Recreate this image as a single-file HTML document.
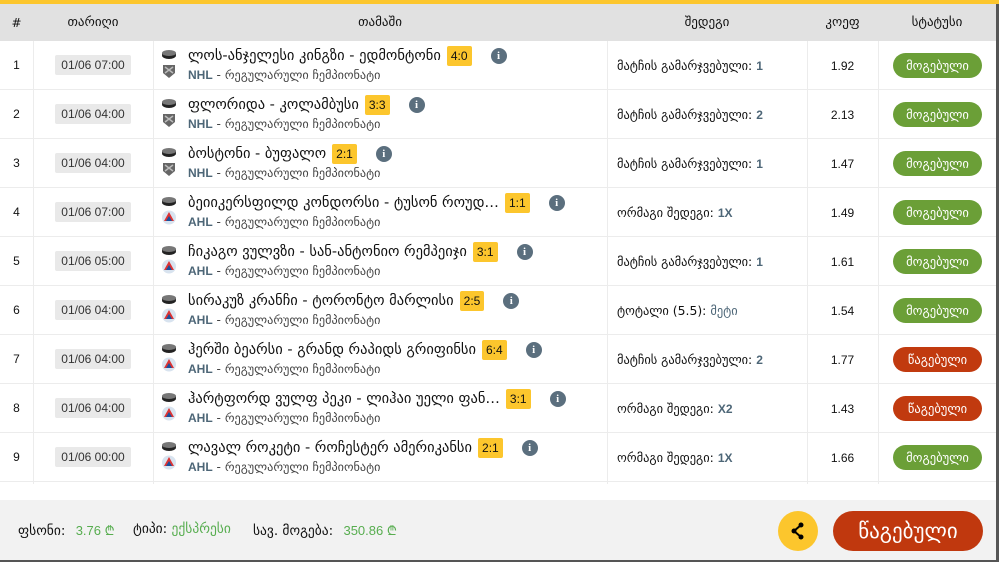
<!DOCTYPE html>
<html><head><meta charset="utf-8"><style>
*{margin:0;padding:0;box-sizing:border-box}
body{width:999px;height:562px;overflow:hidden;background:#fff;font-family:"DejaVu Sans","Liberation Sans",sans-serif;position:relative;color:#111}
.top{position:absolute;left:0;top:0;width:999px;height:4px;background:#fcc62d}
.edge{position:absolute;right:0;top:4px;width:3px;height:556px;background:#555}
.hdr{position:absolute;left:0;top:4px;width:996px;height:37px;background:#e1e1e1;font-size:13px;color:#111}
.hdr div,.row div.c{position:absolute;top:0;height:100%;display:flex;align-items:center;justify-content:center}
.row{position:absolute;left:0;width:996px;height:49px;border-bottom:1px solid #ececec}
.vl{position:absolute;top:41px;height:443px;width:1px;background:#ececec}
.num{font-size:12px;font-family:"Liberation Sans",sans-serif}
.date{background:#e9e9e9;font-family:"Liberation Sans",sans-serif;font-size:12px;color:#333;padding:3px 6px;border-radius:2px}
.g{position:absolute;left:162px;top:0;height:49px;width:440px}
.puck{position:absolute;left:0;top:9px;width:14px;height:9px}
.lg{position:absolute;left:0;top:22px;width:14px;height:15px}
.t{position:absolute;left:26px;top:6px;font-size:14.5px;white-space:nowrap;display:flex;align-items:center;height:18px}
.sc{background:#fcc62d;font-family:"Liberation Sans",sans-serif;font-size:12px;padding:2px 4px;margin-left:6px;border-radius:2px;height:20px;line-height:16px}
.i{display:inline-block;width:16px;height:16px;border-radius:50%;background:#5b6f7e;color:#fff;font:bold 11px "Liberation Serif",serif;text-align:center;line-height:16px;margin-left:19px}
.s{position:absolute;left:26px;top:27px;font-size:12.2px;color:#444;white-space:nowrap}
.s b{color:#4d6677;font-family:"Liberation Sans",sans-serif;font-size:12px}
.res{position:absolute;left:617px;top:0;height:49px;display:flex;align-items:center;font-size:12.4px}
.res b{color:#4d6677;font-family:"Liberation Sans",sans-serif;margin-left:4px;font-size:12px}
.k{position:absolute;left:807px;width:71px;top:0;height:49px;display:flex;align-items:center;justify-content:center;font:12px "Liberation Sans",sans-serif}
.p{position:absolute;left:893px;top:12px;width:89px;height:25px;border-radius:13px;color:#fff;font-size:12.5px;display:flex;align-items:center;justify-content:center}
.w{background:#6b9f37}.l{background:#c13a0f}
.foot{position:absolute;left:0;top:500px;width:996px;height:60px;background:#f2f2f2}
.bot{position:absolute;left:0;top:560px;width:999px;height:2px;background:#555}
.fi{position:absolute;top:21px;font-size:13.5px;white-space:nowrap}
.gr{color:#57ad4f;font-family:"Liberation Sans",sans-serif;font-size:13px}
</style></head><body>
<div class="top"></div>
<div class="hdr">
<div style="left:0;width:33px;font-size:12px">#</div>
<div style="left:33px;width:120px">თარიღი</div>
<div style="left:153px;width:454px">თამაში</div>
<div style="left:607px;width:200px">შედეგი</div>
<div style="left:807px;width:71px">კოეფ</div>
<div style="left:878px;width:118px">სტატუსი</div>
</div>
<div class="vl" style="left:33px"></div><div class="vl" style="left:153px"></div><div class="vl" style="left:607px"></div><div class="vl" style="left:807px"></div><div class="vl" style="left:878px"></div>
<svg width="0" height="0" style="position:absolute"><defs>
<symbol id="pk" viewBox="0 0 14 9"><ellipse cx="7" cy="5.5" rx="7" ry="3.5" fill="#222"/><rect x="0" y="3" width="14" height="2.5" fill="#333"/><ellipse cx="7" cy="3" rx="7" ry="3" fill="#777"/></symbol>
<symbol id="nhl" viewBox="0 0 14 15"><path d="M1 2h12v8l-6 5-6-5z" fill="#666"/><path d="M3 4l8 6M11 4l-8 6" stroke="#bbb" stroke-width="1.5"/></symbol>
<symbol id="ahl" viewBox="0 0 14 15"><circle cx="7" cy="7.5" r="7" fill="#d8e3ef"/><path d="M7 2l5 9H2z" fill="#d33"/><path d="M7 6l3 5H4z" fill="#1b4f9c"/></symbol>
</defs></svg>

<div class="row" style="top:41px"><div class="c num" style="left:0;width:33px">1</div><div class="c" style="left:33px;width:120px"><span class="date">01/06 07:00</span></div>
<div class="g"><svg class="puck"><use href="#pk"/></svg><svg class="lg"><use href="#nhl"/></svg><div class="t">ლოს-ანჯელესი კინგზი - ედმონტონი<span class="sc">4:0</span><span class="i">i</span></div><div class="s"><b>NHL</b> - რეგულარული ჩემპიონატი</div></div>
<div class="res">მატჩის გამარჯვებული:<b>1</b></div><div class="k">1.92</div><div class="p w">მოგებული</div></div>

<div class="row" style="top:90px"><div class="c num" style="left:0;width:33px">2</div><div class="c" style="left:33px;width:120px"><span class="date">01/06 04:00</span></div>
<div class="g"><svg class="puck"><use href="#pk"/></svg><svg class="lg"><use href="#nhl"/></svg><div class="t">ფლორიდა - კოლამბუსი<span class="sc">3:3</span><span class="i">i</span></div><div class="s"><b>NHL</b> - რეგულარული ჩემპიონატი</div></div>
<div class="res">მატჩის გამარჯვებული:<b>2</b></div><div class="k">2.13</div><div class="p w">მოგებული</div></div>

<div class="row" style="top:139px"><div class="c num" style="left:0;width:33px">3</div><div class="c" style="left:33px;width:120px"><span class="date">01/06 04:00</span></div>
<div class="g"><svg class="puck"><use href="#pk"/></svg><svg class="lg"><use href="#nhl"/></svg><div class="t">ბოსტონი - ბუფალო<span class="sc">2:1</span><span class="i">i</span></div><div class="s"><b>NHL</b> - რეგულარული ჩემპიონატი</div></div>
<div class="res">მატჩის გამარჯვებული:<b>1</b></div><div class="k">1.47</div><div class="p w">მოგებული</div></div>

<div class="row" style="top:188px"><div class="c num" style="left:0;width:33px">4</div><div class="c" style="left:33px;width:120px"><span class="date">01/06 07:00</span></div>
<div class="g"><svg class="puck"><use href="#pk"/></svg><svg class="lg"><use href="#ahl"/></svg><div class="t">ბეიიკერსფილდ კონდორსი - ტუსონ როუდ…<span class="sc">1:1</span><span class="i">i</span></div><div class="s"><b>AHL</b> - რეგულარული ჩემპიონატი</div></div>
<div class="res">ორმაგი შედეგი:<b>1X</b></div><div class="k">1.49</div><div class="p w">მოგებული</div></div>

<div class="row" style="top:237px"><div class="c num" style="left:0;width:33px">5</div><div class="c" style="left:33px;width:120px"><span class="date">01/06 05:00</span></div>
<div class="g"><svg class="puck"><use href="#pk"/></svg><svg class="lg"><use href="#ahl"/></svg><div class="t">ჩიკაგო ვულვზი - სან-ანტონიო რემპეიჯი<span class="sc">3:1</span><span class="i">i</span></div><div class="s"><b>AHL</b> - რეგულარული ჩემპიონატი</div></div>
<div class="res">მატჩის გამარჯვებული:<b>1</b></div><div class="k">1.61</div><div class="p w">მოგებული</div></div>

<div class="row" style="top:286px"><div class="c num" style="left:0;width:33px">6</div><div class="c" style="left:33px;width:120px"><span class="date">01/06 04:00</span></div>
<div class="g"><svg class="puck"><use href="#pk"/></svg><svg class="lg"><use href="#ahl"/></svg><div class="t">სირაკუზ კრანჩი - ტორონტო მარლისი<span class="sc">2:5</span><span class="i">i</span></div><div class="s"><b>AHL</b> - რეგულარული ჩემპიონატი</div></div>
<div class="res">ტოტალი (5.5):<b style="font-family:'DejaVu Sans';font-weight:normal;font-size:12.4px">მეტი</b></div><div class="k">1.54</div><div class="p w">მოგებული</div></div>

<div class="row" style="top:335px"><div class="c num" style="left:0;width:33px">7</div><div class="c" style="left:33px;width:120px"><span class="date">01/06 04:00</span></div>
<div class="g"><svg class="puck"><use href="#pk"/></svg><svg class="lg"><use href="#ahl"/></svg><div class="t">ჰერში ბეარსი - გრანდ რაპიდს გრიფინსი<span class="sc">6:4</span><span class="i">i</span></div><div class="s"><b>AHL</b> - რეგულარული ჩემპიონატი</div></div>
<div class="res">მატჩის გამარჯვებული:<b>2</b></div><div class="k">1.77</div><div class="p l">წაგებული</div></div>

<div class="row" style="top:384px"><div class="c num" style="left:0;width:33px">8</div><div class="c" style="left:33px;width:120px"><span class="date">01/06 04:00</span></div>
<div class="g"><svg class="puck"><use href="#pk"/></svg><svg class="lg"><use href="#ahl"/></svg><div class="t">ჰარტფორდ ვულფ პეკი - ლიჰაი უელი ფან…<span class="sc">3:1</span><span class="i">i</span></div><div class="s"><b>AHL</b> - რეგულარული ჩემპიონატი</div></div>
<div class="res">ორმაგი შედეგი:<b>X2</b></div><div class="k">1.43</div><div class="p l">წაგებული</div></div>

<div class="row" style="top:433px"><div class="c num" style="left:0;width:33px">9</div><div class="c" style="left:33px;width:120px"><span class="date">01/06 00:00</span></div>
<div class="g"><svg class="puck"><use href="#pk"/></svg><svg class="lg"><use href="#ahl"/></svg><div class="t">ლავალ როკეტი - როჩესტერ ამერიკანსი<span class="sc">2:1</span><span class="i">i</span></div><div class="s"><b>AHL</b> - რეგულარული ჩემპიონატი</div></div>
<div class="res">ორმაგი შედეგი:<b>1X</b></div><div class="k">1.66</div><div class="p w">მოგებული</div></div>

<div class="foot">
<div class="fi" style="left:18px">ფსონი: <span class="gr" style="margin-left:6px">3.76 ₾</span></div>
<div class="fi" style="left:133px">ტიპი: <span class="gr" style="font-family:'DejaVu Sans';font-size:13.5px">ექსპრესი</span></div>
<div class="fi" style="left:253px">სავ. მოგება: <span class="gr" style="margin-left:6px">350.86 ₾</span></div>
<div style="position:absolute;left:778px;top:11px;width:40px;height:40px;border-radius:50%;background:#fcc62d"><svg width="40" height="40" viewBox="0 0 40 40"><circle cx="23" cy="14" r="2.5"/><circle cx="16" cy="20" r="2.5"/><circle cx="23" cy="26" r="2.5"/><path d="M23 14L16 20L23 26" stroke="#000" stroke-width="2" fill="none"/></svg></div>
<div style="position:absolute;left:833px;top:11px;width:150px;height:40px;border-radius:20px;background:#c0380e;color:#fff;font-size:21px;display:flex;align-items:center;justify-content:center">წაგებული</div>
</div>
<div class="edge"></div><div class="bot"></div>
</body></html>
